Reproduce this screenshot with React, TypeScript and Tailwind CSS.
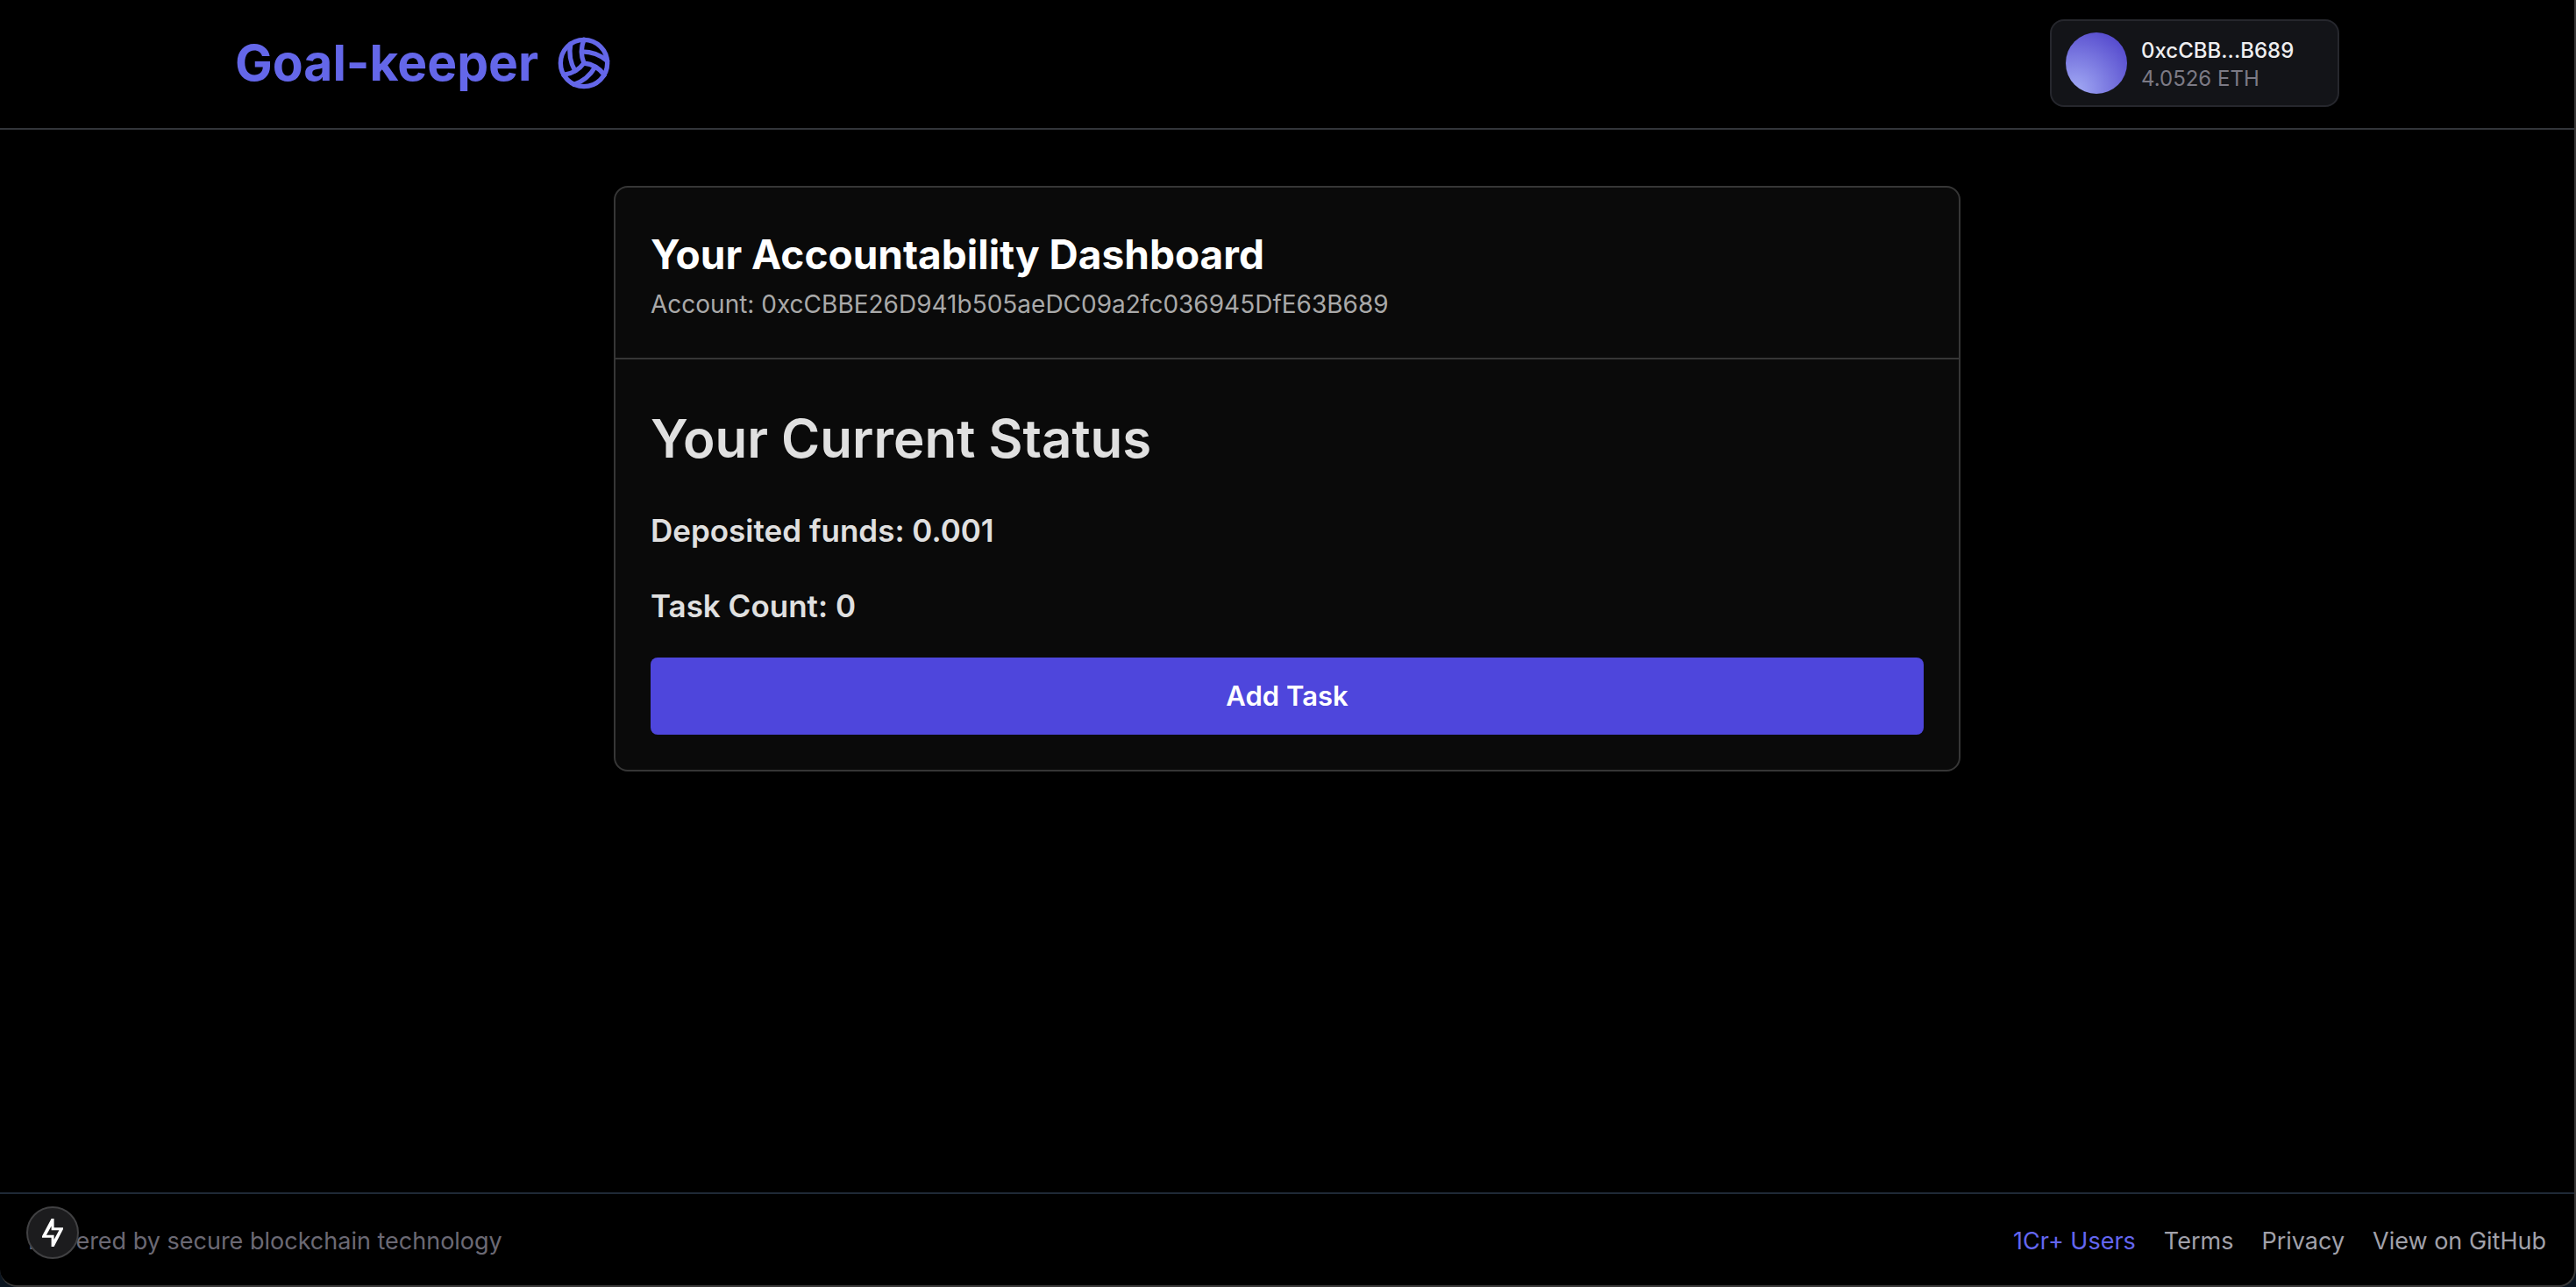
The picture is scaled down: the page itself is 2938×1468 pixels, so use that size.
import { Volleyball } from "lucide-react";

const footerLinks = ["Terms", "Privacy", "View on GitHub"];

function BoltIcon() {
  return (
    <svg viewBox="0 0 24 32" className="h-8 w-6" fill="white" aria-hidden="true">
      <path
        fillRule="evenodd"
        d="M10.6 0H13.6V10.3H24V12L13.6 32H10.6V21.7H0V20ZM10.6 8.6V13.2H19.4L13.6 24V18.8H4.9Z"
      />
    </svg>
  );
}

function Header() {
  return (
    <header className="border-b-2 border-[#32353a] pt-[22px] pb-6">
      <div className="mx-auto flex max-w-[2400px] items-center justify-between">
        <a href="#" className="flex items-center gap-5 text-[#6467e9]">
          <span className="text-[57px] leading-[72px] font-bold">Goal-keeper</span>
          <Volleyball className="size-16" aria-hidden="true" />
        </a>
        <button
          type="button"
          className="flex w-[330px] items-center gap-4 rounded-2xl border-2 border-[#26272d] bg-[#131418] px-4 py-[13px] text-left text-[24px] leading-8"
        >
          <span className="size-[70px] shrink-0 rounded-full bg-[radial-gradient(circle_at_15%_95%,#a3abf5_0%,#5145cb_90%)]" />
          <span className="flex flex-col pt-1">
            <span className="font-medium text-[#eeeef0]">0xcCBB...B689</span>
            <span className="text-[#7c7a85]">4.0526 ETH</span>
          </span>
        </button>
      </div>
    </header>
  );
}

function Dashboard() {
  return (
    <section className="mx-auto max-w-[1536px] rounded-2xl border-2 border-[#363636] bg-[#0a0a0a]">
      <div className="border-b-2 border-[#363636] px-10 pt-12 pb-10">
        <h1 className="text-[46px] leading-[56px] font-bold text-white">Your Accountability Dashboard</h1>
        <p className="mt-2 text-[28px] leading-[42px] text-[#a9a9a9]">
          Account: 0xcCBBE26D941b505aeDC09a2fc036945DfE63B689
        </p>
      </div>
      <div className="flex flex-col gap-8 px-10 pt-11 pb-10 font-semibold text-[#e0e0e0]">
        <h2 className="text-[60px] leading-[92px]">Your Current Status</h2>
        <p className="text-[35px] leading-[54px]">Deposited funds: 0.001</p>
        <p className="text-[35px] leading-[54px]">Task Count: 0</p>
        <button type="button" className="rounded-lg bg-[#4e46dc] py-5 text-[31px] leading-[48px] text-white">
          Add Task
        </button>
      </div>
    </section>
  );
}

function Footer() {
  return (
    <footer className="flex items-center justify-between border-t-2 border-[#1f2937] px-8 pt-[34px] pb-[30px] text-[27px] leading-10">
      <p className="text-[#6b6974]">Powered by secure blockchain technology</p>
      <nav className="flex gap-8 text-[#a1a1aa]">
        <a href="#" className="text-[#6366f1]">
          1Cr+ Users
        </a>
        {footerLinks.map((label) => (
          <a key={label} href="#">
            {label}
          </a>
        ))}
      </nav>
    </footer>
  );
}

export default function App() {
  return (
    <div className="flex min-h-screen bg-[#0b1520] font-['Inter',sans-serif]">
      <div className="relative flex flex-1 flex-col rounded-b-[20px] border-r-2 border-b-2 border-[#3a3939] bg-black">
        <Header />
        <main className="flex-1 px-8 py-16">
          <Dashboard />
        </main>
        <Footer />
        <button
          type="button"
          aria-label="Open developer tools"
          className="absolute bottom-[30px] left-[30px] flex size-[60px] items-center justify-center rounded-full border-2 border-[#414143] bg-[#1c1c1e]"
        >
          <BoltIcon />
        </button>
      </div>
    </div>
  );
}
